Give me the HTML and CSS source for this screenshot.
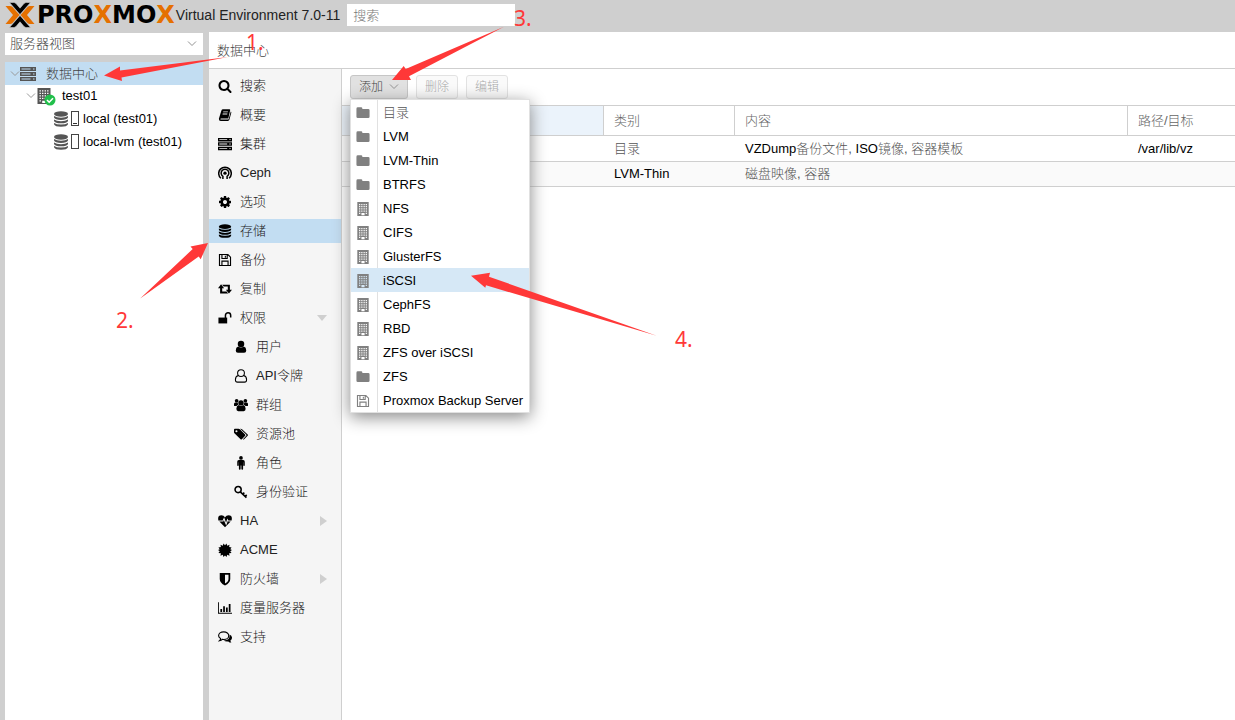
FILE: index.html
```html
<!DOCTYPE html>
<html lang="zh-CN">
<head>
<meta charset="utf-8">
<title>Proxmox Virtual Environment</title>
<link rel="stylesheet" href="styles.css">
</head>
<body>
<svg class="defs" aria-hidden="true">
  <symbol id="search" viewBox="0 0 1792 1792"><path d="M1216 832q0-185-131.500-316.500t-316.500-131.500-316.500 131.500-131.500 316.500 131.500 316.500 316.500 131.500 316.500-131.500 131.500-316.500zm512 832q0 52-38 90t-90 38q-54 0-90-38l-343-342q-179 124-399 124-143 0-273.500-55.500t-225-150-150-225-55.500-273.500 55.500-273.500 150-225 225-150 273.500-55.500 273.500 55.500 225 150 150 225 55.500 273.500q0 220-124 399l343 343q37 37 37 90z"/></symbol>
  <symbol id="cog" viewBox="0 0 1792 1792"><path d="M1152 896q0-106-75-181t-181-75-181 75-75 181 75 181 181 75 181-75 75-181zm512-109v222q0 12-8 23t-20 13l-185 28q-19 54-39 91 35 50 107 138 10 12 10 25t-9 23q-27 37-99 108t-94 71q-12 0-26-9l-138-108q-44 23-91 38-16 136-29 186-7 28-36 28h-222q-14 0-24.500-8.500t-11.500-21.500l-28-184q-49-16-90-37l-141 107q-10 9-25 9-14 0-25-11-126-114-165-168-7-10-7-23 0-12 8-23 15-21 51-66.500t54-70.500q-27-50-41-99l-183-27q-13-2-21-12.500t-8-23.500v-222q0-12 8-23t19-13l186-28q14-46 39-92-40-57-107-138-10-12-10-24 0-10 9-23 26-36 98.500-107.500t94.500-71.500q13 0 26 10l138 107q44-23 91-38 16-136 29-186 7-28 36-28h222q14 0 24.500 8.500t11.500 21.500l28 184q49 16 90 37l142-107q9-9 24-9 13 0 25 10 129 119 165 170 7 8 7 22 0 12-8 23-15 21-51 66.500t-54 70.500q26 50 41 98l183 28q13 2 21 12.500t8 23.500z"/></symbol>
  <symbol id="book" viewBox="0 0 16 16"><path fill-rule="evenodd" d="M5.800 1.500h7.200q1.200 0 .9 1.200L12 11q-.3 1-1.300 1H3.500q-.8 0-.8.600 0 .6.900.6h7.800q.6 0 .8-.6L14.600 4q.9.400.6 1.400L13 13.500q-.4 1.300-1.700 1.300H3.200Q.8 14.800 1 12.200L3.800 3.200Q4.300 1.500 5.800 1.500zM6 4l-.2.900h5.400l.2-.9zM5.400 6.400l-.2.900h5.300l.3-.9z"/></symbol>
  <symbol id="server" viewBox="0 0 16 16"><path fill-rule="evenodd" d="M0 1h16v4H0zM0 6h16v4H0zM0 11h16v4H0zM1.500 2.500v1h9v-1zM1.500 7.500v1h9v-1zM1.500 12.500v1h9v-1zM13 2.500v1h1.500v-1zM13 7.500v1h1.500v-1zM13 12.500v1h1.500v-1z"/></symbol>
  <symbol id="ceph" viewBox="0 0 16 16"><g fill="none" stroke="currentColor" stroke-width="1.700"><path d="M3.300 14A7.200 7.200 0 1 1 12.700 14"/><path d="M5.600 14.800v-3A4.400 4.400 0 1 1 10.400 11.800v3"/></g><circle cx="8" cy="8.200" r="1.900"/></symbol>
  <symbol id="database" viewBox="0 0 16 16"><ellipse cx="8" cy="3" rx="7" ry="2.700"/><path d="M1 5q2.500 1.700 7 1.700T15 5v1.600Q14 9 8 9T1 6.600zM1 8.500q2.500 1.700 7 1.700t7-1.700V10q-1 2.300-7 2.300T1 10zM1 11.900q2.500 1.600 7 1.600t7-1.600v1.400Q14 15.800 8 15.800t-7-2.500z"/></symbol>
  <symbol id="floppy" viewBox="0 0 16 16"><path fill="none" stroke="currentColor" stroke-width="1.300" d="M1.700 1.700h9.600l3 3v9.600H1.700zM4.500 14V9.300h7V14M4.500 2v4.300h6V2M8.400 3v2.300"/></symbol>
  <symbol id="retweet" viewBox="0 0 16 16"><path d="M3.500 2.600L7 7H4.800v3.800h5l1.800 2.200H2.400V7H0zM4.700 3h8.900v5.800H16L12.500 13.200 9 8.800h2.200V5.200H6.500z"/></symbol>
  <symbol id="unlock" viewBox="0 0 16 16"><path d="M.5 7.500h10v6.700H.5z"/><path fill="none" stroke="currentColor" stroke-width="1.700" d="M8.500 8V5a3 3 0 0 1 6 0v2.500"/></symbol>
  <symbol id="user" viewBox="0 0 16 16"><circle cx="8" cy="4.600" r="3.700"/><path d="M4.800 7.500q3.200 2.300 6.400 0 2.800.8 2.800 4.400Q14 14.700 11.500 14.700h-7Q2 14.700 2 11.900 2 8.300 4.800 7.500z"/></symbol>
  <symbol id="user-o" viewBox="0 0 16 16"><g fill="none" stroke="currentColor" stroke-width="1.200"><circle cx="8" cy="4.700" r="3.900"/><path d="M5 7.500Q1.600 8.400 1.600 12.200 1.600 15 4 15h8q2.400 0 2.400-2.800 0-3.800-3.400-4.700"/></g></symbol>
  <symbol id="users" viewBox="0 0 16 16"><circle cx="8" cy="5.600" r="3.100"/><circle cx="3" cy="3.200" r="2.100"/><circle cx="13" cy="3.200" r="2.100"/><path d="M5.400 8q2.600 2 5.200 0 2.700.8 2.700 4.200 0 2.800-2.200 2.800H4.900q-2.200 0-2.200-2.800 0-3.400 2.700-4.200zM0 8.500V6.800q0-1.800 1.400-1.800 1.500.8 3 .3Q4.300 7 5 7.600 3.600 8 2.900 9.200H1Q0 9.200 0 8.500zM16 8.500V6.800q0-1.800-1.400-1.800-1.500.8-3 .3 0 1.700-.6 2.300 1.400.4 2.100 1.600H15q1 0 1-.7z"/></symbol>
  <symbol id="tags" viewBox="0 0 16 16"><path fill-rule="evenodd" d="M0 3Q0 2 1 2h4.200q.8 0 1.500.7l6 5.800q.7.800 0 1.500L9 13.900q-.8.700-1.500 0L.8 7.500Q0 6.800 0 6zM2.800 3.700a1.200 1.200 0 1 0 0 2.400 1.200 1.200 0 0 0 0-2.400z"/><path d="M7 2h.7q.8 0 1.500.7l6.400 5.800q.8.800 0 1.500l-4 3.900q-.8.600-1.400 0l3.500-3.600q1-1 0-2z"/></symbol>
  <symbol id="male" viewBox="0 0 16 16"><circle cx="8" cy="2.200" r="2.100"/><path d="M5.500 4.700h5q1.800 0 1.800 1.800v4q0 .8-.8.800-.9 0-.9-.8V7h-.2v7.500q0 1.100-1 1.100t-1-1.100v-3.700h-.8v3.700q0 1.100-1 1.100t-1-1.100V7h-.2v3.500q0 .8-.9.800-.8 0-.8-.8v-4Q3.700 4.700 5.500 4.700z"/></symbol>
  <symbol id="key" viewBox="0 0 16 16"><g fill="none" stroke="currentColor" stroke-width="1.800"><circle cx="4.700" cy="5.200" r="3.500"/><path d="M7.200 7.800l7 6.700M9.800 10.700l2-2M12.500 13.300l2-2"/></g></symbol>
  <symbol id="heart" viewBox="0 0 16 16"><path d="M.4 7.300Q-.8 1.500 4 1.500 6.400 1.500 8 3.700q1.600-2.200 4-2.200 4.800 0 3.600 5.800h-3.800L10.700 5 9.200 10 7 3.800 5.300 7.300zM1.500 8.500h4.600l.6-1.700L9.300 13l2-5.300.5.800h2.700L8 15z"/></symbol>
  <symbol id="certificate" viewBox="0 0 16 16"><path d="M8 2.500l1.800-2 .7 2.500 2.700-1-.5 2.600 2.800.4-1.500 2.200L16 8l-2 1.300 1.500 2-2.800.5.5 2.700-2.700-1-.7 2.500L8 14.200 6.200 16l-.7-2.500-2.700 1 .5-2.700-2.800-.5 1.500-2L0 8l2-.8L.5 5l2.800-.4L2.800 2l2.700 1 .7-2.500z"/></symbol>
  <symbol id="shield" viewBox="0 0 16 16"><path fill-rule="evenodd" d="M2 1h12v7q0 4.500-6 7.500Q2 12.500 2 8zM8 3v10.200q4-2.300 4-5.200V3z"/></symbol>
  <symbol id="chart" viewBox="0 0 16 16"><path d="M0 1.500h1v12h15v1H0zM2.700 9h2v3.500h-2zM5.900 6h2v6.500h-2zM9.100 7.500h2v5h-2zM12.300 3.500h2v9h-2z"/></symbol>
  <symbol id="comments" viewBox="0 0 16 16"><path fill="none" stroke="currentColor" stroke-width="1.300" d="M6.500 2.200c3.400 0 5.800 1.900 5.800 4.300s-2.400 4.300-5.800 4.300q-.9 0-1.600-.2Q3.700 11.900 1.800 12.200q1.200-1 1.200-2.500Q.7 8.500.7 6.500c0-2.400 2.400-4.300 5.800-4.300z"/><path d="M13.200 5q3 1.500 2.800 4.200-.2 1.800-1.800 2.800.2 1.500 1.200 2.400-2.300.1-3.600-1.400-3.200.5-5.500-1.100 7.100.3 6.900-5.500z"/></symbol>
  <symbol id="folder" viewBox="0 0 16 16"><path d="M.5 3q0-1.500 1.500-1.500h3.800q1.500 0 1.500 1.500v.3H14q1.500 0 1.500 1.500v7.500q0 1.500-1.500 1.500H2q-1.500 0-1.500-1.500z"/></symbol>
  <symbol id="building" viewBox="0 0 16 16"><path fill-rule="evenodd" d="M1.500 0h13v16h-13zM3.500 2.200v1.400h1.400V2.200zM6 2.200v1.400h1.400V2.200zM8.600 2.200v1.400H10V2.200zM11.100 2.200v1.400h1.400V2.200zM3.500 4.700v1.400h1.400V4.700zM6 4.700v1.400h1.400V4.700zM8.600 4.700v1.400H10V4.700zM11.100 4.700v1.400h1.400V4.700zM3.500 7.200v1.400h1.400V7.200zM6 7.200v1.400h1.400V7.200zM8.600 7.200v1.400H10V7.200zM11.100 7.200v1.400h1.400V7.200zM3.500 9.700v1.400h1.400V9.700zM6 9.700v1.400h1.400V9.700zM8.600 9.700v1.400H10V9.700zM11.100 9.700v1.400h1.400V9.700zM3.500 12.200v1.400h1.400v-1.400zM11.100 12.200v1.400h1.400v-1.400zM6.200 12.700V15h3.600v-2.300z"/></symbol>
  <symbol id="chevron" viewBox="0 0 10 6"><path fill="none" stroke="currentColor" d="M1 .5l4 4 4-4"/></symbol>
</svg>

<header class="topbar">
  <svg class="mark" viewBox="0 0 30 26" aria-hidden="true">
    <path fill="#e57000" d="M.5 4H5q1.500 0 2.500 1l7 8-7 8q-1 1-2.500 1H.5l7.500-9zM29.500 4H25q-1.500 0-2.500 1l-7 8 7 8q1 1 2.500 1h4.500L22 13z"/>
    <path fill="#000" stroke="#cfcfcf" stroke-width=".6" d="M4.500.5h4Q10 .5 11 1.500l4 4.700 4-4.700q1-1 2.500-1h4L15 12.500zM4.500 25.500h4q1.500 0 2.500-1l4-4.700 4 4.700q1 1 2.500 1h4L15 13.500z"/>
  </svg>
  <span class="wordmark">PRO<b>X</b>MO<b>X</b></span>
  <span class="version">Virtual Environment 7.0-11</span>
  <input class="global-search" type="text" placeholder="搜索" aria-label="搜索">
</header>

<div class="workspace">
  <aside class="resources">
    <div class="view-select">
      <select aria-label="视图"><option>服务器视图</option></select>
      <svg class="chevron"><use href="#chevron"/></svg>
    </div>
    <ul class="tree">
      <li class="node selected"><svg class="chevron"><use href="#chevron"/></svg><svg class="icon large"><use href="#server"/></svg><span class="node-name">数据中心</span></li>
      <li class="node level-1"><svg class="chevron"><use href="#chevron"/></svg><span class="host"><svg class="icon large"><use href="#building"/></svg><svg class="ok" viewBox="0 0 12 12"><circle cx="6" cy="6" r="5.500" fill="#21bf4b"/><path d="M3 6l2.200 2.200L9 4.300" fill="none" stroke="#fff" stroke-width="1.600"/></svg></span><span>test01</span></li>
      <li class="node level-2"><svg class="icon large"><use href="#database"/></svg><span class="usage low"></span><span>local (test01)</span></li>
      <li class="node level-2"><svg class="icon large"><use href="#database"/></svg><span class="usage"></span><span>local-lvm (test01)</span></li>
    </ul>
  </aside>

  <main class="panel">
    <h1 class="panel-title">数据中心</h1>
    <div class="panel-body">
      <nav class="menu">
        <a href="#"><svg class="icon"><use href="#search"/></svg>搜索</a>
        <a href="#"><svg class="icon"><use href="#book"/></svg>概要</a>
        <a href="#"><svg class="icon"><use href="#server"/></svg>集群</a>
        <a href="#"><svg class="icon"><use href="#ceph"/></svg>Ceph</a>
        <a href="#"><svg class="icon"><use href="#cog"/></svg>选项</a>
        <a href="#" class="selected"><svg class="icon"><use href="#database"/></svg>存储</a>
        <a href="#"><svg class="icon"><use href="#floppy"/></svg>备份</a>
        <a href="#"><svg class="icon"><use href="#retweet"/></svg>复制</a>
        <a href="#"><svg class="icon"><use href="#unlock"/></svg>权限<i class="caret down"></i></a>
        <a href="#" class="sub"><svg class="icon"><use href="#user"/></svg>用户</a>
        <a href="#" class="sub"><svg class="icon"><use href="#user-o"/></svg>API令牌</a>
        <a href="#" class="sub"><svg class="icon"><use href="#users"/></svg>群组</a>
        <a href="#" class="sub"><svg class="icon"><use href="#tags"/></svg>资源池</a>
        <a href="#" class="sub"><svg class="icon"><use href="#male"/></svg>角色</a>
        <a href="#" class="sub"><svg class="icon"><use href="#key"/></svg>身份验证</a>
        <a href="#"><svg class="icon"><use href="#heart"/></svg>HA<i class="caret"></i></a>
        <a href="#"><svg class="icon"><use href="#certificate"/></svg>ACME</a>
        <a href="#"><svg class="icon"><use href="#shield"/></svg>防火墙<i class="caret"></i></a>
        <a href="#"><svg class="icon"><use href="#chart"/></svg>度量服务器</a>
        <a href="#"><svg class="icon"><use href="#comments"/></svg>支持</a>
      </nav>

      <section class="content">
        <div class="toolbar">
          <div class="add">
            <button type="button" class="btn pressed">添加<svg class="chevron"><use href="#chevron"/></svg></button>
            <ul class="dropdown">
              <li><button type="button"><svg class="icon"><use href="#folder"/></svg><span class="cjk">目录</span></button></li>
              <li><button type="button"><svg class="icon"><use href="#folder"/></svg><span>LVM</span></button></li>
              <li><button type="button"><svg class="icon"><use href="#folder"/></svg><span>LVM-Thin</span></button></li>
              <li><button type="button"><svg class="icon"><use href="#folder"/></svg><span>BTRFS</span></button></li>
              <li><button type="button"><svg class="icon"><use href="#building"/></svg><span>NFS</span></button></li>
              <li><button type="button"><svg class="icon"><use href="#building"/></svg><span>CIFS</span></button></li>
              <li><button type="button"><svg class="icon"><use href="#building"/></svg><span>GlusterFS</span></button></li>
              <li><button type="button" class="hover"><svg class="icon"><use href="#building"/></svg><span>iSCSI</span></button></li>
              <li><button type="button"><svg class="icon"><use href="#building"/></svg><span>CephFS</span></button></li>
              <li><button type="button"><svg class="icon"><use href="#building"/></svg><span>RBD</span></button></li>
              <li><button type="button"><svg class="icon"><use href="#building"/></svg><span>ZFS over iSCSI</span></button></li>
              <li><button type="button"><svg class="icon"><use href="#folder"/></svg><span>ZFS</span></button></li>
              <li><button type="button"><svg class="icon"><use href="#floppy"/></svg><span>Proxmox Backup Server</span></button></li>
            </ul>
          </div>
          <button type="button" class="btn" disabled>删除</button>
          <button type="button" class="btn" disabled>编辑</button>
        </div>
        <table class="grid">
          <colgroup><col class="c-id"><col class="c-type"><col class="c-content"><col></colgroup>
          <thead><tr><th class="sorted"></th><th>类别</th><th>内容</th><th>路径/目标</th></tr></thead>
          <tbody>
            <tr><td></td><td><span class="cjk">目录</span></td><td>VZDump<span class="cjk">备份文件, </span>ISO<span class="cjk">镜像, 容器模板</span></td><td>/var/lib/vz</td></tr>
            <tr><td></td><td>LVM-Thin</td><td><span class="cjk">磁盘映像, 容器</span></td><td></td></tr>
          </tbody>
        </table>
      </section>
    </div>
  </main>
</div>

<div class="notes">
  <svg class="arrows"><path d="M104 75.500L120 66.500V70.500L228 57 121.500 77.500 122 81z"/><path d="M208 243l-17.500 3.500 2.200 2.500-52.500 49.600 58.500-42 2 2.700z"/><path d="M392 80l11.700-14 2 3L504 26.700 409 76.300l2 3.700z"/><path d="M471 275.700l19-3-1 4 167.700 59L486 285.300l-.7 2.400z"/></svg>
  <span class="note n1">1.</span>
  <span class="note n2">2.</span>
  <span class="note n3">3.</span>
  <span class="note n4">4.</span>
</div>
</body>
</html>
```
FILE: styles.css
```css
* { box-sizing: border-box; }

body {
  margin: 0;
  height: 100vh;
  display: flex;
  flex-direction: column;
  overflow: hidden;
  position: relative;
  background: #cfcfcf;
  color: #000;
  font: 300 13px/20px "Liberation Sans", "Noto Sans CJK SC", sans-serif;
}

ul { list-style: none; margin: 0; padding: 0; }
button, input, select { font: inherit; }
svg { fill: currentColor; }
.defs { position: absolute; width: 0; height: 0; }
.icon { width: 14px; height: 14px; flex: none; }
.icon.large { width: 16px; height: 16px; }
.chevron { width: 10px; height: 6px; flex: none; color: #919191; }
.cjk { color: #555; }

/* top bar */
.topbar { display: flex; align-items: center; height: 32px; padding: 0 5px 2px; flex: none; }
.mark { width: 30px; height: 26px; flex: none; }
.wordmark { margin: 0 1px 0 2px; font: bold 24px/28px "DejaVu Sans", sans-serif; }
.wordmark b { color: #e57000; }
.version { font-size: 14px; color: #222; white-space: nowrap; }
.global-search { width: 168px; height: 22px; margin-left: 7px; padding: 0 6px; border: 0; background: #fff; }
.global-search::placeholder { color: #777; opacity: 1; }

/* layout */
.workspace { flex: 1; display: flex; gap: 6px; padding-left: 5px; min-height: 0; }
.resources { width: 198px; flex: none; display: flex; flex-direction: column; gap: 7px; padding-top: 1px; }
.view-select { display: flex; align-items: center; height: 22px; padding: 0 6px 0 5px; background: #fff; color: #444; }
.view-select select { flex: 1; appearance: none; border: 0; padding: 0; background: none; color: inherit; }

.tree { flex: 1; background: #fff; }
.node { display: flex; align-items: center; height: 22px; padding-left: 5px; }
.node .chevron { color: #999; }
.node .icon { color: #555; }
.node.selected { height: 23px; background: #c2ddf2; }
.node.level-1 { padding-left: 21px; }
.node.level-2 { height: 23px; padding-left: 48px; }
.node-name { margin-left: 10px; color: #444; }
.host { position: relative; display: flex; margin-right: 10px; }
.ok { position: absolute; left: 8px; top: 6px; width: 12px; height: 12px; }
.usage { width: 8px; height: 15px; margin: 0 4px 0 2px; border: 1px solid #444; display: flex; align-items: flex-end; }
.usage.low::after { content: ""; flex: 1; height: 1px; margin: 1px; background: #333; }

/* main panel */
.panel { flex: 1; display: flex; flex-direction: column; min-width: 0; background: #fff; }
.panel-title { margin: 0; height: 37px; padding: 0 8px; font: inherit; line-height: 37px; color: #444; border-bottom: 1px solid #cfcfcf; }
.panel-body { flex: 1; display: flex; min-height: 0; }
.menu { width: 133px; flex: none; display: flex; flex-direction: column; gap: 5px; padding-top: 5px; background: #f5f5f5; border-right: 1px solid #cfcfcf; }
.menu a { display: flex; align-items: center; gap: 8px; height: 24px; padding: 0 14px 0 9px; color: #222; text-decoration: none; }
.menu a.sub { padding-left: 25px; }
.menu a.selected { background: #c2ddf2; }
.menu .icon { color: #000; }
.caret { margin-left: auto; border: solid transparent; border-width: 5px 0 5px 7px; border-left-color: #cfcfcf; }
.caret.down { border-width: 6px 5px 0; border-color: #cfcfcf transparent transparent; }

/* content */
.content { flex: 1; min-width: 0; }
.toolbar { display: flex; gap: 8px; height: 36px; padding: 6px 8px; }
.btn { display: flex; align-items: center; gap: 6px; height: 24px; padding: 0 8px; font-size: 12px; border: 1px solid #d8d8d8; border-radius: 3px; background: #f5f5f5; color: #555; }
.btn:disabled { color: #aaa; border-color: #e2e2e2; background: #fafafa; }
.btn.pressed { background: #e1e1e1; border-color: #c6c6c6; color: #444; }
.add { position: relative; }
.dropdown { position: absolute; left: 0; top: 24px; z-index: 2; width: 180px; border: 1px solid #e1e1e1; background: linear-gradient(90deg, transparent 26px, #e1e1e1 26px, #e1e1e1 27px, transparent 27px) #fff; box-shadow: 0 4px 16px #888; }
.dropdown button { display: flex; align-items: center; gap: 13px; width: 100%; height: 24px; padding: 1px 0 0 5px; border: 0; background: none; color: #000; white-space: nowrap; }
.dropdown button.hover { background: #d6e8f6; }
.dropdown .icon { color: #808080; }

.grid { width: 100%; table-layout: fixed; border-collapse: separate; border-spacing: 0; border-top: 1px solid #cfcfcf; }
.c-id { width: 262px; }
.c-type { width: 131px; }
.c-content { width: 393px; }
.grid th, .grid td { padding: 0 10px; text-align: left; font-weight: inherit; white-space: nowrap; border-bottom: 1px solid #cfcfcf; }
.grid th { height: 30px; color: #666; border-right: 1px solid #cfcfcf; }
.grid th:last-child { border-right: 0; }
.grid th.sorted { background: #ebf3fb; }
.grid td { height: 26px; }
.grid tbody tr:nth-child(2) td { height: 25px; background: #fafafa; }

/* annotations drawn over the interface */
.notes { position: absolute; inset: 0; z-index: 5; pointer-events: none; color: #ff3838; }
.arrows { width: 100%; height: 100%; }
.note { position: absolute; font: 21px/24px "Noto Sans", sans-serif; }
.n1 { left: 246px; top: 30px; }
.n2 { left: 116px; top: 308px; }
.n3 { left: 514px; top: 6px; }
.n4 { left: 675px; top: 327px; }
```
